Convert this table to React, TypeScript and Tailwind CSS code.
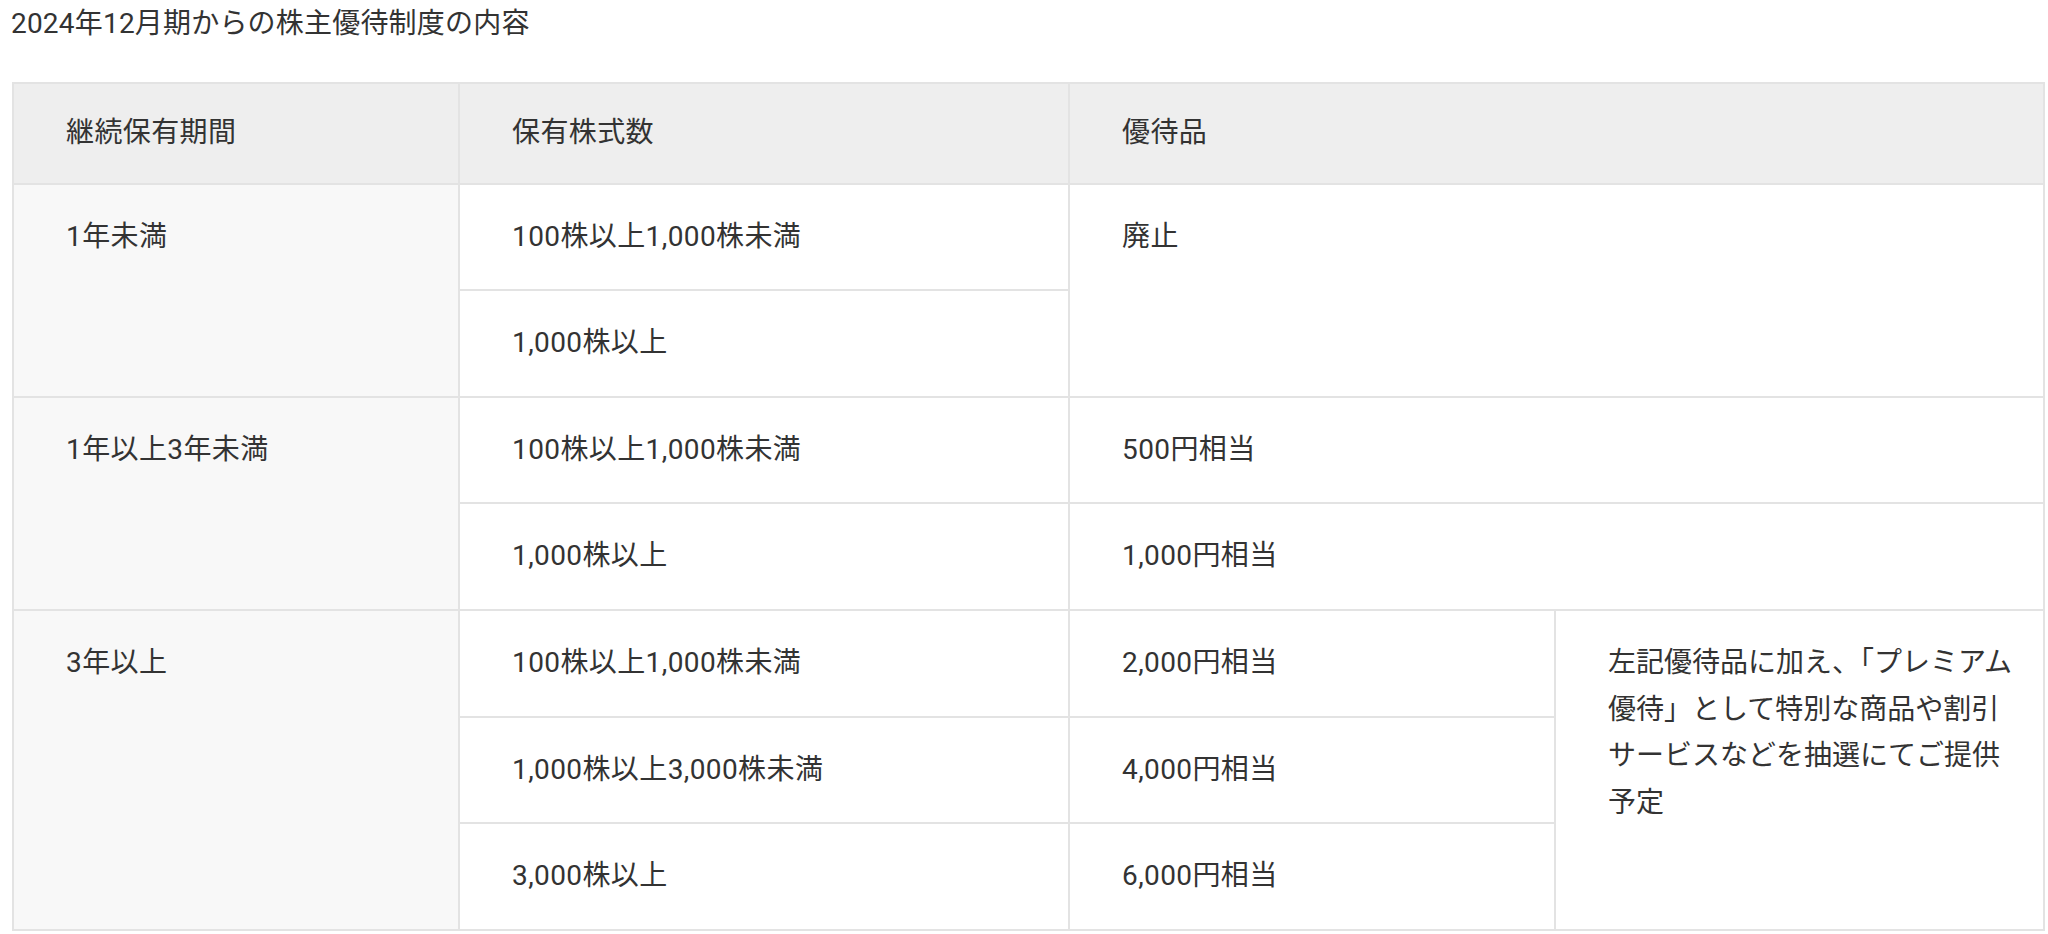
const font = "font-['Roboto','Noto_Sans_CJK_JP',sans-serif]";

const cell = "border-2 border-[#e3e3e3] px-[52px] py-[29px] align-top leading-[46.6px]";
const colOne = cell + " bg-[#f8f8f8]";
const colWhite = cell + " bg-white";

const App = () => {
    return (
        <div className={"bg-white text-[#333333] text-[28px] " + font}>
            <p className="pl-[11px] leading-[48px] tracking-[0.2px]">2024年12月期からの株主優待制度の内容</p>
            <table className="ml-[12px] mt-[34px] w-[2031px] border-collapse table-fixed tracking-[0.4px]">
                <colgroup>
                    <col className="w-[446px]" />
                    <col className="w-[610px]" />
                    <col className="w-[486px]" />
                    <col className="w-[489px]" />
                </colgroup>
                <thead>
                    <tr className="bg-[#eeeeee]">
                        <th className="border-2 border-[#e3e3e3] px-[52px] py-[26px] text-left font-normal leading-[46.6px]">継続保有期間</th>
                        <th className="border-2 border-[#e3e3e3] px-[52px] py-[26px] text-left font-normal leading-[46.6px]">保有株式数</th>
                        <th colSpan={2} className="border-2 border-[#e3e3e3] px-[52px] py-[26px] text-left font-normal leading-[46.6px]">優待品</th>
                    </tr>
                </thead>
                <tbody>
                    <tr>
                        <td rowSpan={2} className={colOne}>1年未満</td>
                        <td className={colWhite}>100株以上1,000株未満</td>
                        <td rowSpan={2} colSpan={2} className={colWhite}>廃止</td>
                    </tr>
                    <tr>
                        <td className={colWhite}>1,000株以上</td>
                    </tr>
                    <tr>
                        <td rowSpan={2} className={colOne}>1年以上3年未満</td>
                        <td className={colWhite}>100株以上1,000株未満</td>
                        <td colSpan={2} className={colWhite}>500円相当</td>
                    </tr>
                    <tr>
                        <td className={colWhite}>1,000株以上</td>
                        <td colSpan={2} className={colWhite}>1,000円相当</td>
                    </tr>
                    <tr>
                        <td rowSpan={3} className={colOne}>3年以上</td>
                        <td className={colWhite}>100株以上1,000株未満</td>
                        <td className={colWhite}>2,000円相当</td>
                        {/* premium note spans all three rows */}
                        <td rowSpan={3} className="border-2 border-[#e3e3e3] pl-[52px] pr-[30px] py-[29px] align-top leading-[46.6px] tracking-normal bg-white [text-spacing-trim:normal]">
                            左記優待品に加え、「プレミアム優待」として特別な商品や割引サービスなどを抽選にてご提供予定
                        </td>
                    </tr>
                    <tr>
                        <td className={colWhite}>1,000株以上3,000株未満</td>
                        <td className={colWhite}>4,000円相当</td>
                    </tr>
                    <tr>
                        <td className={colWhite}>3,000株以上</td>
                        <td className={colWhite}>6,000円相当</td>
                    </tr>
                </tbody>
            </table>
        </div>
    );
};

export default App;
